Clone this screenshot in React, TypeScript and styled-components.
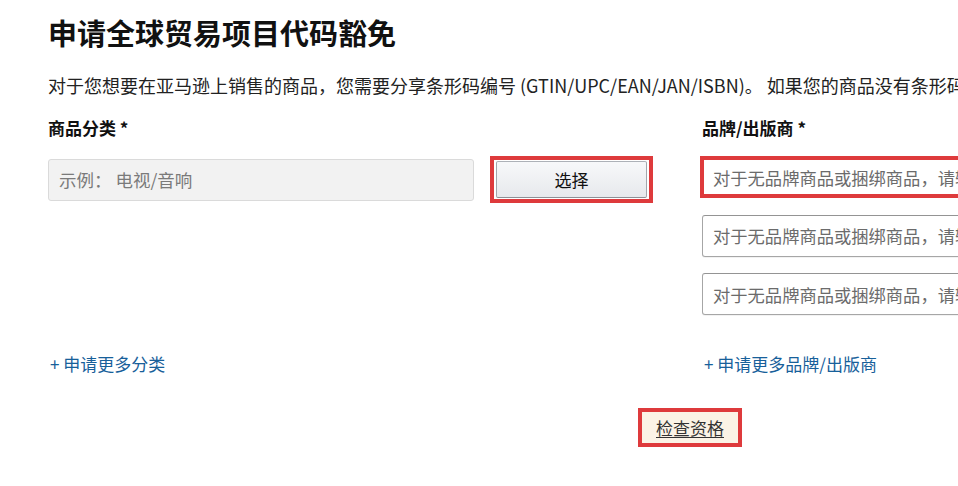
import React from "react";
import styled, { createGlobalStyle } from "styled-components";

const GlobalStyle = createGlobalStyle`
  html, body {
    margin: 0;
    padding: 0;
    background: #ffffff;
    overflow: hidden;
  }
  body {
    font-family: "Noto Sans CJK SC", "Noto Sans", "Liberation Sans", sans-serif;
    color: #111111;
  }
`;

const RED = "#de3a3c";

const Page = styled.div`
  width: 958px;
  height: 486px;
  box-sizing: border-box;
  padding: 16px 0 0 48px;
  overflow: hidden;
`;

const Title = styled.h1`
  margin: 0;
  font-size: 29px;
  line-height: 32px;
  font-weight: 700;
  color: #111111;
  white-space: nowrap;
`;

const Intro = styled.p`
  margin: 25px 0 0;
  font-size: 18px;
  line-height: 24px;
  color: #222222;
  white-space: nowrap;
`;

const FormGrid = styled.div`
  margin-top: 19px;
  display: grid;
  grid-template-columns: 604px 420px;
  grid-template-rows: auto auto auto;
  column-gap: 50px;
`;

const Label = styled.div`
  font-size: 17px;
  line-height: 24px;
  font-weight: 700;
  color: #111111;
  white-space: nowrap;
`;

const Fields = styled.div`
  margin-top: 16px;
  display: flex;
  flex-direction: column;
  gap: 16.5px;
  align-items: flex-start;
`;

const CategoryRow = styled.div`
  display: flex;
  align-items: center;
  gap: 16px;
`;

const ReadonlyInput = styled.div`
  width: 426px;
  height: 42px;
  box-sizing: border-box;
  padding: 0 10px;
  display: flex;
  align-items: center;
  background: #f2f2f2;
  border: 1px solid #dadada;
  border-radius: 3px;
  font-size: 17.5px;
  color: #7a7a7a;
  white-space: nowrap;
`;

const Highlight = styled.div`
  border: 4px solid ${RED};
  padding: 1px 2px;
  display: flex;
`;

const SelectButton = styled.button`
  width: 151px;
  height: 37px;
  box-sizing: border-box;
  border: 1px solid #a2a6ac;
  border-top-color: #adb1b8;
  border-bottom-color: #8d9096;
  border-radius: 2px;
  background: linear-gradient(to bottom, #f7f8fa, #e7e9ec);
  font-family: inherit;
  font-size: 17px;
  color: #111111;
  padding: 0;
  cursor: pointer;
`;

const BrandInput = styled.div<{ $marked?: boolean }>`
  width: 420px;
  height: 42px;
  box-sizing: border-box;
  display: flex;
  align-items: center;
  white-space: nowrap;
  overflow: hidden;
  font-size: 17.3px;
  color: #6b6b6b;
  background: #ffffff;
  border-radius: 3px;
  ${({ $marked }) =>
    $marked
      ? `border: 4px solid ${RED}; border-radius: 0; margin-left: -2px; padding-left: 9px;`
      : `border: 1px solid #a6a6a6; border-top-color: #949494; padding-left: 10px; box-shadow: 0 1px 0 rgba(0,0,0,0.05);`}
`;

const AddLink = styled.a`
  display: block;
  margin-top: 37px;
  font-size: 17px;
  line-height: 24px;
  color: #17609a;
  text-decoration: none;
  white-space: nowrap;
  padding-left: 2px;
`;

const Footer = styled.div`
  margin-top: 32px;
  padding-left: 590px;
  display: flex;
`;

const CheckButton = styled.button`
  height: 39px;
  box-sizing: border-box;
  padding: 0 14px;
  border: 4px solid ${RED};
  background: #fbf3e6;
  font-family: inherit;
  font-size: 17px;
  color: #333333;
  text-decoration: underline;
  text-underline-offset: 2px;
  cursor: pointer;
`;

const brandPlaceholder = "对于无品牌商品或捆绑商品，请输入“通用”";

export default function App() {
  return (
    <>
      <GlobalStyle />
      <Page>
        <Title>申请全球贸易项目代码豁免</Title>
        <Intro>
          对于您想要在亚马逊上销售的商品，您需要分享条形码编号 (GTIN/UPC/EAN/JAN/ISBN)。 如果您的商品没有条形码，您可以申请豁免。
        </Intro>
        <FormGrid>
          <Label>商品分类 *</Label>
          <Label>品牌/出版商 *</Label>
          <Fields>
            <CategoryRow>
              <ReadonlyInput>示例： 电视/音响</ReadonlyInput>
              <Highlight>
                <SelectButton>选择</SelectButton>
              </Highlight>
            </CategoryRow>
          </Fields>
          <Fields>
            <BrandInput $marked>{brandPlaceholder}</BrandInput>
            <BrandInput>{brandPlaceholder}</BrandInput>
            <BrandInput>{brandPlaceholder}</BrandInput>
          </Fields>
          <AddLink href="#">+ 申请更多分类</AddLink>
          <AddLink href="#">+ 申请更多品牌/出版商</AddLink>
        </FormGrid>
        <Footer>
          <CheckButton>检查资格</CheckButton>
        </Footer>
      </Page>
    </>
  );
}
